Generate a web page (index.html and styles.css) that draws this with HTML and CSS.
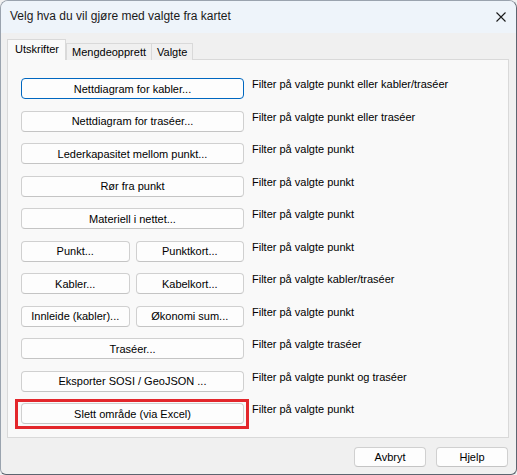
FILE: index.html
```html
<!DOCTYPE html>
<html lang="no">
<head>
<meta charset="utf-8">
<title>Velg hva du vil gjøre med valgte fra kartet</title>
<link rel="stylesheet" href="styles.css">
</head>
<body>
<div class="window">
  <div class="titlebar">
    <span class="title">Velg hva du vil gjøre med valgte fra kartet</span>
    <svg class="close" width="10" height="10" viewBox="0 0 10 10"><path d="M0.5 0.5 L9.5 9.5 M9.5 0.5 L0.5 9.5" stroke="#1a1a1a" stroke-width="1.1" fill="none"/></svg>
  </div>
  <div class="content">
    <div class="tabs">
      <div class="tab active">Utskrifter</div>
      <div class="tab">Mengdeopprett</div>
      <div class="tab">Valgte</div>
    </div>
    <div class="panel">
      <div class="row"><div class="btns"><button class="btn focus">Nettdiagram for kabler...</button></div><div class="desc">Filter på valgte punkt eller kabler/traséer</div></div>
      <div class="row"><div class="btns"><button class="btn">Nettdiagram for traséer...</button></div><div class="desc">Filter på valgte punkt eller traséer</div></div>
      <div class="row"><div class="btns"><button class="btn">Lederkapasitet mellom punkt...</button></div><div class="desc">Filter på valgte punkt</div></div>
      <div class="row"><div class="btns"><button class="btn">Rør fra punkt</button></div><div class="desc">Filter på valgte punkt</div></div>
      <div class="row"><div class="btns"><button class="btn">Materiell i nettet...</button></div><div class="desc">Filter på valgte punkt</div></div>
      <div class="row"><div class="btns split"><button class="btn">Punkt...</button><button class="btn">Punktkort...</button></div><div class="desc">Filter på valgte punkt</div></div>
      <div class="row"><div class="btns split"><button class="btn">Kabler...</button><button class="btn">Kabelkort...</button></div><div class="desc">Filter på valgte kabler/traséer</div></div>
      <div class="row"><div class="btns split"><button class="btn">Innleide (kabler)...</button><button class="btn">Økonomi sum...</button></div><div class="desc">Filter på valgte punkt</div></div>
      <div class="row"><div class="btns"><button class="btn">Traséer...</button></div><div class="desc">Filter på valgte traséer</div></div>
      <div class="row"><div class="btns"><button class="btn">Eksporter SOSI / GeoJSON ...</button></div><div class="desc">Filter på valgte punkt og traséer</div></div>
      <div class="row"><div class="btns marked"><button class="btn">Slett område (via Excel)</button></div><div class="desc">Filter på valgte punkt</div></div>
    </div>
    <div class="footer">
      <button class="btn fbtn">Avbryt</button>
      <button class="btn fbtn">Hjelp</button>
    </div>
  </div>
</div>
</body>
</html>
```
FILE: styles.css
```css
html, body {
  margin: 0;
  padding: 0;
  background: #f0f0f0;
}
body {
  font-family: "Segoe UI", "Liberation Sans", Arial, sans-serif;
  font-size: 11px;
  color: #000;
}
.window {
  width: 515px;
  height: 473px;
  border: 1px solid #5d6570;
  border-top-color: #9aa3ae;
  border-left-color: #9aa3ae;
  border-radius: 8px 8px 6px 6px;
  overflow: hidden;
  background: #f0f0f0;
  display: flex;
  flex-direction: column;
}
.titlebar {
  height: 30px;
  flex: none;
  background: #eef4fa;
  display: flex;
  align-items: center;
  justify-content: space-between;
  padding: 0 10px 2px 9px;
}
.title {
  font-size: 12px;
  color: #1a1a1a;
}
.close {
  margin-top: 2px;
}
.content {
  flex: 1;
  padding: 7px 7px 0 6px;
  display: flex;
  flex-direction: column;
}
.tabs {
  display: flex;
  align-items: flex-end;
  height: 20px;
  position: relative;
  z-index: 1;
  margin-bottom: -1px;
}
.tab {
  height: 17px;
  box-sizing: border-box;
  border: 1px solid #d9d9d9;
  border-bottom: none;
  background: #f0f0f0;
  padding: 0 5px;
  line-height: 16px;
  margin-left: -1px;
  color: #000;
}
.tab.active {
  height: 21px;
  background: #f9f9f9;
  margin-left: 0;
  padding: 0 6px 0 7px;
  line-height: 19px;
  margin-right: 1px;
}
.panel {
  width: 502px;
  height: 379px;
  box-sizing: border-box;
  border: 1px solid #d9d9d9;
  background: #f9f9f9;
  padding: 18px 10px 0 13px;
  display: flex;
  flex-direction: column;
  row-gap: 11.5px;
}
.row {
  display: flex;
  align-items: flex-start;
  gap: 8px;
}
.btns {
  width: 223px;
  flex: none;
  display: flex;
  gap: 6px;
}
.btns.marked {
  border: 3px solid #e3262b;
  padding: 1px 2px 2px 3px;
  margin: -4px -5px -5px -6px;
}
.btn {
  font: inherit;
  color: #000;
  height: 21px;
  box-sizing: border-box;
  border: 1px solid #d0d0d0;
  border-bottom-color: #c4c4c4;
  border-radius: 4px;
  background: #fdfdfd;
  padding: 0;
  margin: 0;
  line-height: 18px;
  text-align: center;
  flex: 1;
}
.btn.focus {
  border: 1.5px solid #0067c0;
}
.desc {
  line-height: 14px;
  margin-top: -1px;
  white-space: nowrap;
}
.footer {
  display: flex;
  justify-content: flex-end;
  gap: 10px;
  padding-top: 9px;
  padding-right: 1px;
}
.fbtn {
  flex: none;
  width: 72px;
  height: 20px;
  line-height: 17px;
}
```
